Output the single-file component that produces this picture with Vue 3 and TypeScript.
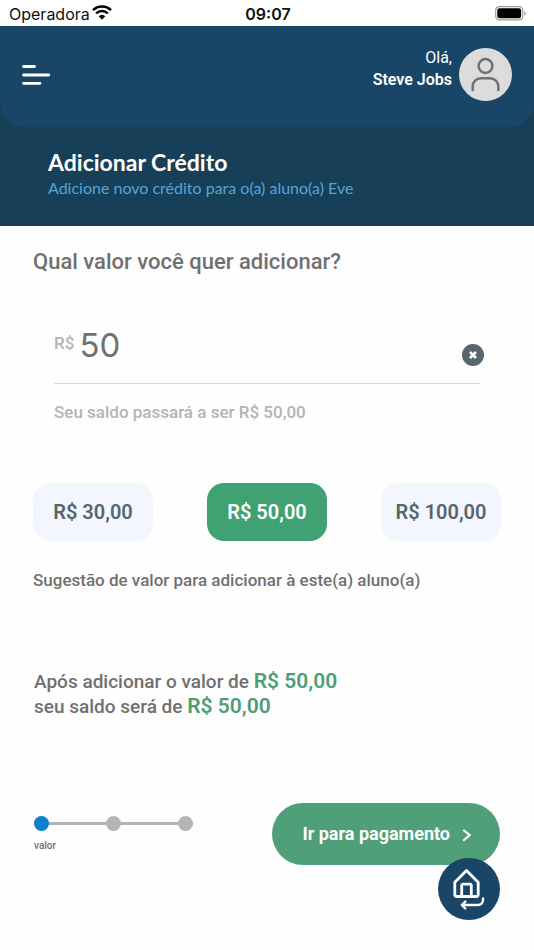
<script setup lang="ts">
import { computed, ref } from 'vue'

const amount = ref('50')
const options: number[] = [30, 50, 100]
const steps: string[] = ['valor', '', '']
const currentStep = 0

const numeric = computed<number>(() => Number(amount.value) || 0)

function money(value: number): string {
  return `R$ ${value.toFixed(2).replace('.', ',')}`
}

function pick(value: number): void {
  amount.value = String(value)
}
</script>

<template>
  <div class="screen">
    <div class="status">
      <div class="carrier">
        <span>Operadora</span>
        <svg class="wifi" viewBox="0 0 20 15" aria-hidden="true">
          <path d="M1 5.200a12.600 12.600 0 0 1 18 0" />
          <path d="M4.100 8.500a8.200 8.200 0 0 1 11.800 0" />
          <path class="solid" d="M6.700 11.300a4.800 4.800 0 0 1 6.600 0L10 14.800z" />
        </svg>
      </div>
      <time class="clock">09:07</time>
      <svg class="battery" viewBox="0 0 32 15" aria-hidden="true">
        <rect class="shell" x="0.7" y="0.7" width="27" height="13.2" rx="3.6" />
        <rect x="2.3" y="2.3" width="23.8" height="10" rx="2.2" />
        <path class="tip" d="M29.4 5.2c2 .8 2 3.6 0 4.4z" />
      </svg>
    </div>

    <div class="top">
      <header class="header">
        <button class="menu" type="button" aria-label="Menu">
          <svg viewBox="0 0 30 22" aria-hidden="true">
            <path d="M2.5 2.5h11M2.5 11h25.3M2.5 19.3h16.5" />
          </svg>
        </button>
        <div class="user">
          <p class="greeting">Olá,<br /><strong>Steve Jobs</strong></p>
          <svg class="avatar" viewBox="0 0 53 53" aria-hidden="true">
            <circle class="disc" cx="26.5" cy="26.5" r="26.5" />
            <circle class="figure" cx="26.5" cy="18" r="6.9" />
            <path class="figure" d="M13.7 42v-3.500a8.200 8.200 0 0 1 8.200-8.200h9.200a8.200 8.200 0 0 1 8.200 8.200v3.500" />
          </svg>
        </div>
      </header>
      <div class="banner">
        <h1>Adicionar Crédito</h1>
        <p>Adicione novo crédito para o(a) aluno(a) Eve</p>
      </div>
    </div>

    <main class="content">
      <h2><label for="amount">Qual valor você quer adicionar?</label></h2>

      <div class="entry">
        <div class="field">
          <span class="currency">R$</span>
          <input id="amount" v-model="amount" type="text" inputmode="numeric" />
          <button class="clear" type="button" aria-label="Limpar" @click="amount = ''">
            <svg viewBox="0 0 22 22" aria-hidden="true"><path d="M8 8l6 6M14 8l-6 6" /></svg>
          </button>
        </div>
        <p class="preview">Seu saldo passará a ser {{ money(numeric) }}</p>
      </div>

      <div class="options">
        <button
          v-for="value in options"
          :key="value"
          type="button"
          class="option"
          :class="{ selected: value === numeric }"
          @click="pick(value)"
        >
          {{ money(value) }}
        </button>
      </div>
      <p class="hint">Sugestão de valor para adicionar à este(a) aluno(a)</p>

      <p class="summary">
        Após adicionar o valor de <strong>{{ money(numeric) }}</strong><br />
        seu saldo será de <strong>{{ money(numeric) }}</strong>
      </p>

      <div class="footer">
        <div class="progress">
          <ol class="steps">
            <li v-for="(step, index) in steps" :key="index" :class="{ active: index === currentStep }"></li>
          </ol>
          <span class="step-name">{{ steps[currentStep] }}</span>
        </div>
        <div class="actions">
          <button class="pay" type="button">
            <span>Ir para pagamento</span>
            <svg viewBox="0 0 10 14" aria-hidden="true"><path d="M2 2.500l5.800 4.700L2 12" /></svg>
          </button>
          <button class="home" type="button" aria-label="Início">
            <svg viewBox="0 0 62 62" aria-hidden="true">
              <path class="house" d="M16.800 24.300 28.500 12.600 40.200 24.300V36.500a2 2 0 0 1-2 2H18.800a2 2 0 0 1-2-2z" />
              <path class="house" d="M23.700 38V27.600a1.500 1.500 0 0 1 1.500-1.500h6.600a1.500 1.500 0 0 1 1.500 1.500V38" />
              <path class="arrow" d="M45 40.500v1.500a5 5 0 0 1-5 5H24M27.300 43.600 23.800 47l3.500 3.500" />
            </svg>
          </button>
        </div>
      </div>
    </main>
  </div>
</template>

<style>
body {
  margin: 0;
  background: #fefefe;
}
</style>

<style scoped>
.screen {
  font-family: Roboto, "Liberation Sans", sans-serif;
  color: #707070;
}

h1,
h2,
p,
ol {
  margin: 0;
  padding: 0;
}

button {
  border: 0;
  padding: 0;
  font: inherit;
  cursor: pointer;
}

svg {
  display: block;
  fill: none;
  stroke-linecap: round;
  stroke-linejoin: round;
}

.status {
  display: grid;
  grid-template-columns: 1fr auto 1fr;
  align-items: center;
  height: 26px;
  padding: 0 7px 0 9px;
  background: #fff;
  color: #111;
  font-family: Inter, sans-serif;
  font-size: 16px;
  line-height: 28px;
}

.carrier {
  display: flex;
  align-items: center;
  gap: 2px;
}

.wifi {
  width: 20px;
  height: 15px;
  margin-bottom: 3px;
  stroke: #000;
  stroke-width: 2.5;
  stroke-linecap: butt;
}

.wifi .solid {
  fill: #000;
  stroke: none;
}

.clock {
  font-weight: 600;
}

.battery {
  justify-self: end;
  width: 32px;
  height: 15px;
  margin-bottom: 2px;
  fill: #000;
}

.battery .shell {
  fill: none;
  stroke: #999;
  stroke-width: 1.2;
}

.battery .tip {
  fill: #999;
}

.top {
  background: #173f57;
  color: #fff;
}

.header {
  display: flex;
  align-items: center;
  justify-content: space-between;
  box-sizing: border-box;
  height: 101px;
  padding: 0 22px 4px 21px;
  border-radius: 0 0 24px 24px;
  background: #194566;
}

.menu {
  background: none;
}

.menu svg {
  width: 30px;
  height: 22px;
  stroke: #fff;
  stroke-width: 2.8;
}

.user {
  display: flex;
  align-items: center;
  gap: 7px;
}

.greeting {
  padding-bottom: 12px;
  font-size: 16px;
  line-height: 22px;
  text-align: right;
}

.greeting strong {
  font-weight: 600;
}

.avatar {
  width: 53px;
  height: 53px;
}

.disc {
  fill: #dcdcdc;
}

.figure {
  stroke: #707070;
  stroke-width: 2.5;
}

.banner {
  padding: 21px 48px 26px;
  font-family: Lato, "Noto Sans", sans-serif;
}

.banner h1 {
  font-size: 23px;
  line-height: 28px;
}

.banner p {
  color: #55a5d9;
  font-size: 16px;
  line-height: 24px;
}

.content {
  padding: 21px 33px 80px;
}

h2 {
  font-size: 22px;
  font-weight: 500;
  line-height: 30px;
}

.entry {
  padding: 39px 21px 0;
}

.field {
  display: flex;
  align-items: center;
  gap: 5px;
  height: 67px;
  border-bottom: 1px solid #d9d9d9;
}

.currency {
  padding-bottom: 13px;
  color: #b4b4b4;
  font-size: 17px;
  font-weight: 500;
  line-height: 20px;
}

.field input {
  flex: 1;
  min-width: 0;
  padding: 0 0 9px;
  border: 0;
  outline: 0;
  background: none;
  color: #707070;
  font-family: Inter, sans-serif;
  font-size: 33px;
  font-weight: 400;
  line-height: 40px;
}

.clear {
  flex: none;
  margin-right: -4px;
  margin-top: 10px;
  border-radius: 50%;
  background: #55666f;
}

.clear svg {
  width: 22px;
  height: 22px;
  stroke: #fff;
  stroke-width: 2.6;
  stroke-linecap: butt;
}

.preview {
  margin-top: 16px;
  color: #b4b4b4;
  font-size: 17px;
  font-weight: 500;
  line-height: 24px;
}

.options {
  display: flex;
  justify-content: space-between;
  margin-top: 59px;
}

.option {
  width: 120px;
  height: 58px;
  border-radius: 17px;
  background: #f3f6ff;
  color: #55666f;
  font-size: 20px;
  font-weight: 600;
}

.option.selected {
  background: #40a172;
  color: #fff;
}

.hint {
  margin-top: 27px;
  font-size: 17px;
  font-weight: 500;
  line-height: 24px;
}

.summary {
  margin-top: 77px;
  padding-left: 1px;
  font-size: 19px;
  font-weight: 500;
  line-height: 24px;
}

.summary strong {
  color: #4c9e77;
  font-size: 21px;
  font-weight: 600;
}

.footer {
  display: flex;
  align-items: flex-start;
  justify-content: space-between;
  margin-top: 84px;
}

.progress {
  padding: 13px 0 0 1px;
}

.steps {
  display: flex;
  justify-content: space-between;
  width: 159px;
  list-style: none;
  background: linear-gradient(#b4b4b4, #b4b4b4) center / 100% 3px no-repeat;
}

.steps li {
  width: 15px;
  height: 15px;
  border-radius: 50%;
  background: #b4b4b4;
}

.steps li.active {
  background: #0c80cc;
}

.step-name {
  display: block;
  margin-top: 7px;
  font-size: 10px;
  font-weight: 500;
  line-height: 16px;
}

.actions {
  position: relative;
  padding-right: 1px;
}

.pay {
  display: flex;
  align-items: center;
  gap: 12px;
  height: 62px;
  padding: 0 28px 0 30px;
  border-radius: 31px;
  background: #4f9f79;
  color: #fff;
  font-size: 18px;
  font-weight: 700;
}

.pay span {
  padding-bottom: 2px;
}

.pay svg {
  width: 10px;
  height: 14px;
  margin-top: 2px;
  stroke: #fff;
  stroke-width: 2.2;
}

.home {
  position: absolute;
  top: 55px;
  right: 1px;
  border-radius: 50%;
  background: #194566;
}

.home svg {
  width: 62px;
  height: 62px;
  stroke: #fff;
}

.house {
  stroke-width: 2.8;
}

.arrow {
  stroke-width: 2.4;
}
</style>
